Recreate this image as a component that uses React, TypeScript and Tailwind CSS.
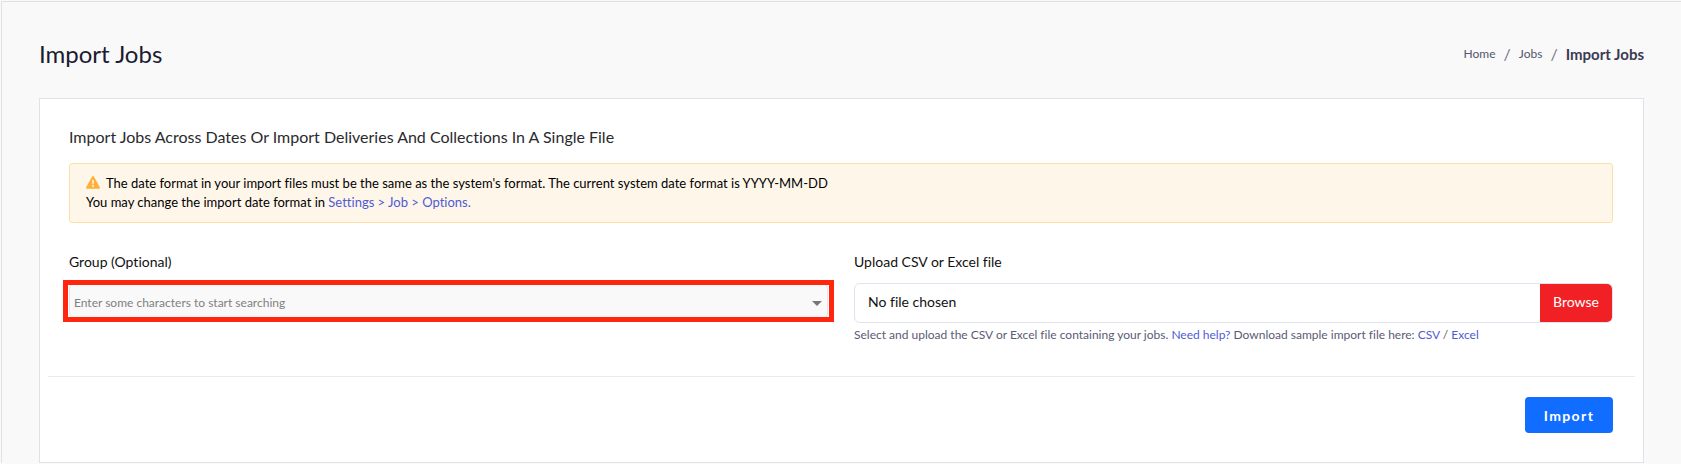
const BREADCRUMBS = [
  { label: 'Home', href: '#home' },
  { label: 'Jobs', href: '#jobs' },
];

const LINK_CLASS = 'text-[#4f5bd5] hover:underline';

function WarningIcon() {
  return (
    <svg viewBox="0 0 14 13" className="mr-1.5 inline-block h-[13px] w-[14px] align-[-1px]" aria-hidden="true">
      <path
        d="M6.1.6a1.04 1.04 0 0 1 1.8 0l5.9 10.6c.4.7-.1 1.5-.9 1.5H1.1c-.8 0-1.3-.8-.9-1.5z"
        fill="#ffb03a"
      />
      <path d="M6.1 4h1.8l-.3 4.2H6.4z" fill="#fff6ea" />
      <circle cx="7" cy="10.1" r="1" fill="#fff6ea" />
    </svg>
  );
}

function PageHeader() {
  return (
    <header className="flex h-24 items-center justify-between pt-2">
      <h1 className="text-2xl leading-8 text-[#1b1b32]">Import Jobs</h1>
      <nav aria-label="Breadcrumb">
        <ol className="flex items-center text-[12px] leading-5 text-[#55556d]">
          {BREADCRUMBS.map((item) => (
            <li key={item.label} className="flex items-center">
              <a href={item.href} className="hover:underline">
                {item.label}
              </a>
              <span className="px-2 text-[16px] text-[#74748a]">/</span>
            </li>
          ))}
          <li className="text-[15px] font-bold text-[#3b3b52]" aria-current="page">
            Import Jobs
          </li>
        </ol>
      </nav>
    </header>
  );
}

function GroupField() {
  return (
    <div>
      <label htmlFor="group" className="block text-[14px] leading-5">
        Group (Optional)
      </label>
      <div className="relative mt-[11px]">
        <select
          id="group"
          defaultValue=""
          className="block h-9 w-full appearance-none rounded-md border border-[#e4e4ee] bg-[#f9f9f9] pl-1 pr-8 pt-1 text-[12px] text-[#808080]"
        >
          <option value="">Enter some characters to start searching</option>
        </select>
        <svg
          viewBox="0 0 10 5"
          className="pointer-events-none absolute right-1.5 top-[18px] h-[5px] w-[10px]"
          aria-hidden="true"
        >
          <path d="M0 0h10L5 5z" fill="#777" />
        </svg>
        <div className="pointer-events-none absolute -inset-x-1.5 -inset-y-[3px] border-5 border-[#ff260d]" />
      </div>
    </div>
  );
}

function UploadField() {
  return (
    <div>
      <label htmlFor="file" className="block text-[14px] leading-5">
        Upload CSV or Excel file
      </label>
      <div className="relative mt-[11px] flex h-10 overflow-hidden rounded-md border border-[#e2e2ee] bg-white text-[14px] leading-9">
        <span className="flex-1 px-[13px]">No file chosen</span>
        <span className="w-[72px] bg-[#f12025] text-center text-white">Browse</span>
        <input id="file" type="file" className="absolute inset-0 w-full cursor-pointer opacity-0" />
      </div>
      <p className="mt-0.5 text-[12px] leading-5 text-[#5b5b75]">
        Select and upload the CSV or Excel file containing your jobs.{' '}
        <a href="#help" className={LINK_CLASS}>
          Need help?
        </a>{' '}
        Download sample import file here:{' '}
        <a href="#csv" className={LINK_CLASS}>
          CSV
        </a>{' '}
        /{' '}
        <a href="#excel" className={LINK_CLASS}>
          Excel
        </a>
      </p>
    </div>
  );
}

export default function App() {
  return (
    <div className="min-h-screen bg-[#f9f9f9] pl-px pt-px font-['Lato',sans-serif] text-[#111] [font-variant-ligatures:none]">
      <div className="border-l border-t border-[#e0e2e2] px-[37px]">
        <PageHeader />

        <main className="border border-[#e1e1ea] bg-white">
          <form onSubmit={(e) => e.preventDefault()}>
            <div className="pl-[29px] pr-[30px] pt-[26px]">
              <h2 className="text-[16px] leading-6 text-[#2a2a2e]">
                Import Jobs Across Dates Or Import Deliveries And Collections In A Single File
              </h2>

              <div className="mt-3.5 rounded-[3px] border border-[#ffdfa6] bg-[#fff6ea] px-4 py-[10px] text-[13px] leading-[19px] text-black">
                <p>
                  <WarningIcon />
                  The date format in your import files must be the same as the system's format. The current system
                  date format is YYYY-MM-DD
                </p>
                <p>
                  You may change the import date format in{' '}
                  <a href="#settings" className={LINK_CLASS}>
                    Settings &gt; Job &gt; Options.
                  </a>
                </p>
              </div>

              <div className="mt-[29px] grid grid-cols-2 gap-[26px]">
                <GroupField />
                <UploadField />
              </div>
            </div>

            <hr className="mx-2 mt-[31px] border-[#ebebeb]" />

            <div className="flex justify-end pb-[29px] pr-[30px] pt-5">
              <button
                type="submit"
                className="h-9 w-[88px] rounded bg-[#116dff] text-[14px] font-bold tracking-widest text-white"
              >
                Import
              </button>
            </div>
          </form>
        </main>
      </div>
    </div>
  );
}
